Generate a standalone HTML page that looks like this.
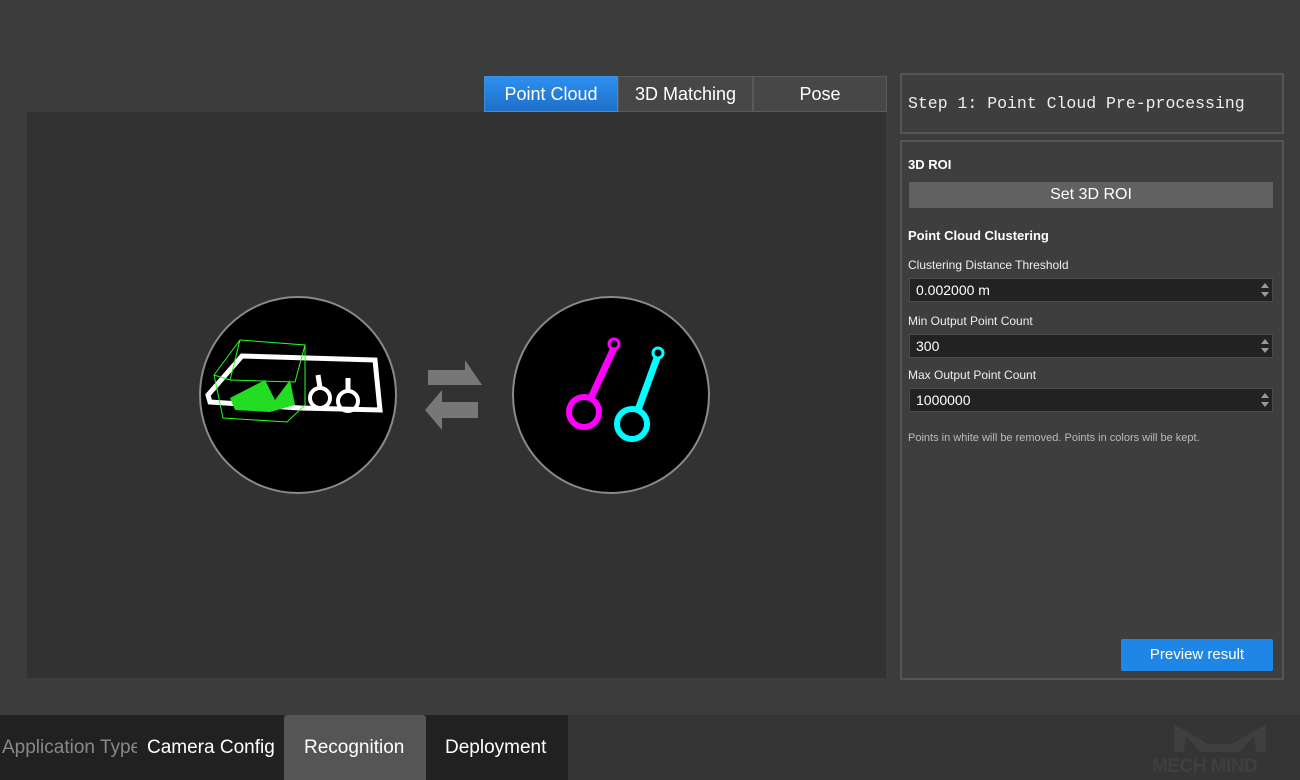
<!DOCTYPE html>
<html><head><style>
*{margin:0;padding:0;box-sizing:border-box}
body{width:1300px;height:780px;background:#3c3c3c;font-family:"Liberation Sans",sans-serif;position:relative;overflow:hidden;color:#fff}
.a{position:absolute}
.tab{position:absolute;top:76px;height:36px;border:1px solid #5a5a5a;background:#474747;color:#fff;font-size:18px;text-align:center;line-height:34px}
.lbl{position:absolute;left:908px;font-size:12px;color:#eee}
.inp{position:absolute;left:909px;width:364px;height:24px;background:#222;border:1px solid #4a4a4a;font-size:14px;line-height:22px;padding-left:6px;color:#fff}
.inp:before{content:"";position:absolute;right:3px;top:4px;border:4px solid transparent;border-bottom:5px solid #999;border-top:0}
.inp:after{content:"";position:absolute;right:3px;top:13px;border:4px solid transparent;border-top:5px solid #999;border-bottom:0}
</style></head><body>
<div class="a" style="left:27px;top:112px;width:859px;height:566px;background:#323232"></div>
<div class="tab" style="left:484px;width:134px;background:linear-gradient(#2e8ff0,#1f6fc8);border-color:#3a90e0">Point Cloud</div>
<div class="tab" style="left:618px;width:135px">3D Matching</div>
<div class="tab" style="left:753px;width:134px">Pose</div>

<svg class="a" style="left:190px;top:290px" width="530" height="210">
<circle cx="108" cy="105" r="98" fill="#000" stroke="#8a8a8a" stroke-width="2"/>
<path d="M18 105 L52 66 L185 70 L190 120 L110 118 L20 112Z" fill="none" stroke="#fff" stroke-width="5"/>
<path d="M24 85 L50 50 L115 55 L115 115 L97 132 L33 128Z M50 50 L40 90 L24 85 M115 55 L105 92 L40 90" fill="none" stroke="#2f2" stroke-width="1"/>
<path d="M40 108 L75 90 L85 110 L100 90 L105 115 L80 122 L45 120Z" fill="#2d2" />
<circle cx="130" cy="108" r="10" fill="none" stroke="#fff" stroke-width="4"/><path d="M130 98 L128 85" stroke="#fff" stroke-width="5"/>
<circle cx="158" cy="111" r="10" fill="none" stroke="#fff" stroke-width="4"/><path d="M158 101 L158 88" stroke="#fff" stroke-width="5"/>
<path d="M238 80 L275 80 L275 70 L292 95 L238 95Z" fill="#777"/>
<path d="M288 112 L252 112 L252 100 L235 120 L252 140 L252 128 L288 128Z" fill="#777"/>
<circle cx="421" cy="105" r="98" fill="#000" stroke="#8a8a8a" stroke-width="2"/>
<circle cx="424" cy="54" r="5" fill="none" stroke="#f0f" stroke-width="3"/>
<path d="M424 58 L400 110" stroke="#f0f" stroke-width="7"/>
<circle cx="394" cy="122" r="15" fill="none" stroke="#f0f" stroke-width="6"/>
<circle cx="468" cy="63" r="5" fill="none" stroke="#0ff" stroke-width="3"/>
<path d="M467 68 L448 120" stroke="#0ff" stroke-width="7"/>
<circle cx="442" cy="134" r="15" fill="none" stroke="#0ff" stroke-width="6"/>
</svg>

<div class="a" style="left:900px;top:73px;width:384px;height:61px;border:2px solid #555;background:#3e3e3e"></div>
<div class="a" style="left:908px;top:94px;font-family:'Liberation Mono',monospace;font-size:16.5px;color:#eee">Step 1: Point Cloud Pre-processing</div>
<div class="a" style="left:900px;top:140px;width:384px;height:540px;border:2px solid #555;background:#3e3e3e"></div>
<div class="a" style="left:908px;top:157px;font-size:13px;font-weight:bold">3D ROI</div>
<div class="a" style="left:909px;top:182px;width:364px;height:26px;background:#616161;font-size:16px;text-align:center;line-height:26px">Set 3D ROI</div>
<div class="a" style="left:908px;top:228px;font-size:13px;font-weight:bold">Point Cloud Clustering</div>
<div class="lbl" style="top:258px">Clustering Distance Threshold</div>
<div class="inp" style="top:278px">0.002000 m</div>
<div class="lbl" style="top:314px">Min Output Point Count</div>
<div class="inp" style="top:334px">300</div>
<div class="lbl" style="top:368px">Max Output Point Count</div>
<div class="inp" style="top:388px">1000000</div>
<div class="a" style="left:908px;top:432px;font-size:11px;color:#bbb">Points in white will be removed. Points in colors will be kept.</div>
<div class="a" style="left:1121px;top:639px;width:152px;height:32px;background:#1f86e6;border-radius:2px;font-size:15px;text-align:center;line-height:32px">Preview result</div>

<div class="a" style="left:0;top:715px;width:1300px;height:65px;background:#353535"></div>
<div class="a" style="left:0;top:715px;width:568px;height:65px;background:#212121"></div>
<div class="a" style="left:284px;top:715px;width:142px;height:65px;background:#555;border-radius:3px 3px 0 0"></div>
<div class="a" style="left:2px;top:737px;font-size:19px;color:#888;white-space:nowrap;width:135px;overflow:hidden">Application Type</div>
<div class="a" style="left:147px;top:737px;font-size:19px;white-space:nowrap;width:133px;overflow:hidden">Camera Config</div>
<div class="a" style="left:304px;top:737px;font-size:19px">Recognition</div>
<div class="a" style="left:445px;top:737px;font-size:19px">Deployment</div>
<svg class="a" style="left:1170px;top:722px" width="110" height="32"><path d="M4 2 L38 22 L62 22 L96 2 L96 30 L86 30 L84 14 L70 30 L30 30 L16 14 L14 30 L4 30Z" fill="#3f3f3f"/></svg>
<div class="a" style="left:1152px;top:757px;font-size:19px;font-weight:bold;color:#3f3f3f;letter-spacing:-0.5px;line-height:20px">MECH MIND</div>
</body></html>
